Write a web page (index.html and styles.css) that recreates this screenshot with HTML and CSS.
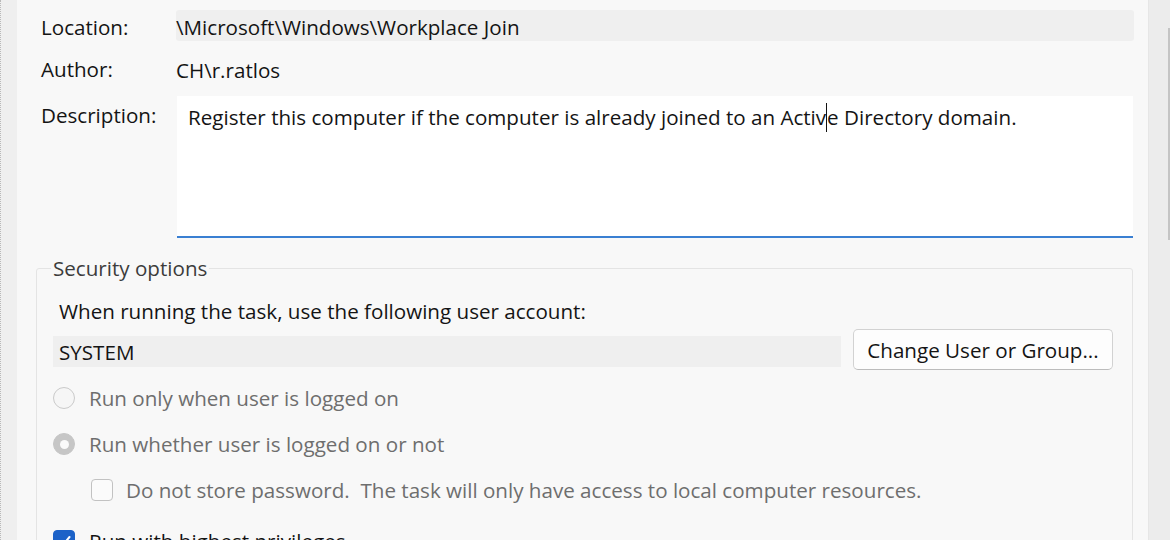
FILE: index.html
```html
<!DOCTYPE html>
<html>
<head>
<meta charset="utf-8">
<link rel="stylesheet" href="styles.css">
</head>
<body>
<div class="window">
  <div class="edge-left"></div>
  <div class="panel">
    <div class="props">
      <div class="label">Location:</div>
      <div class="value readonly">\Microsoft\Windows\Workplace Join</div>
      <div class="label">Author:</div>
      <div class="value">CH\r.ratlos</div>
      <div class="label label-top">Description:</div>
      <div class="textarea">Register this computer if the computer is already joined to an Activ<span class="caret"></span>e Directory domain.</div>
    </div>
    <fieldset class="security">
      <legend>Security options</legend>
      <div class="line">When running the task, use the following user account:</div>
      <div class="account-row">
        <div class="account">SYSTEM</div>
        <button class="btn">Change User or Group...</button>
      </div>
      <div class="option disabled first"><span class="radio"></span>Run only when user is logged on</div>
      <div class="option disabled"><span class="radio on"></span>Run whether user is logged on or not</div>
      <div class="option disabled sub"><span class="check"></span>Do not store password.&nbsp; The task will only have access to local computer resources.</div>
      <div class="option last"><span class="check on"><svg viewBox="0 0 22 22" width="22" height="22"><path d="M5.5 11.5 L9.5 15.5 L16.5 7" fill="none" stroke="#fff" stroke-width="2" stroke-linecap="round" stroke-linejoin="round"/></svg></span>Run with highest privileges</div>
    </fieldset>
  </div>
  <div class="edge-right"><div class="scroll-line"></div></div>
</div>
</body>
</html>
```
FILE: styles.css
```css
* { box-sizing: border-box; }
html, body { margin: 0; padding: 0; }
body {
  width: 1170px;
  height: 540px;
  overflow: hidden;
  background: #f0f0f0;
  font-family: "Open Sans", "Noto Sans", "DejaVu Sans", sans-serif;
  font-size: 20.6px;
  color: #141414;
}
.window {
  display: flex;
  height: 540px;
  overflow: hidden;
}
.edge-left {
  width: 17px;
  flex: none;
  background: #efefef;
  border-left: 1px dotted #b9b9b9;
}
.edge-right {
  width: 22px;
  flex: none;
  background: #ececec;
  border-left: 1px solid #e6e6e6;
  display: flex;
  justify-content: flex-end;
  padding-top: 28px;
}
.scroll-line {
  width: 2px;
  height: 212px;
  background: #c4c4c4;
}
.panel {
  flex: 1;
  background: #f8f8f8;
  padding: 10px 14px 0 19px;
  overflow: hidden;
}
.props {
  display: grid;
  grid-template-columns: 135px 1fr;
  grid-template-rows: 31px 43px 142px;
  row-gap: 6px;
  margin-left: 5px;
  align-items: center;
  line-height: 28px;
}
.label:first-child { padding-top: 2px; }
.label-top { align-self: start; padding-top: 5px; }
.readonly {
  height: 31px;
  background: #efefef;
  border-radius: 3px;
  display: flex;
  align-items: center;
  padding-top: 6px;
}
.value { padding-top: 2px; }
.textarea {
  align-self: stretch;
  background: #ffffff;
  border-bottom: 2px solid #3a7fd2;
  padding: 7px 11px 6px;
  margin-left: 1px;
  margin-right: 1px;
}
.caret {
  display: inline-block;
  width: 0;
  height: 29px;
  border-left: 1.5px solid #111;
  vertical-align: -7px;
}
.security {
  margin: 17px 1px 0 0;
  padding: 14px 19px 0 16px;
  border: 1px solid #e4e4e4;
  border-radius: 3px;
  height: 320px;
}
.security legend {
  color: #3c3c3c;
  padding: 0 2px;
  margin-left: -2px;
  line-height: 26px;
}
.line { padding-left: 6px; height: 26px; line-height: 26px; margin-top: 3px; }
.account-row {
  display: flex;
  align-items: center;
  gap: 12px;
  margin-top: 5px;
}
.account {
  flex: 1;
  height: 31px;
  line-height: 33px;
  background: #efefef;
  padding-left: 6px;
  margin-top: 4px;
}
.btn {
  width: 260px;
  height: 41px;
  font: inherit;
  color: #141414;
  background: #fdfdfd;
  border: 1px solid #d2d2d2;
  border-bottom-color: #bcbcbc;
  border-radius: 5px;
  padding: 0;
}
.option {
  display: flex;
  align-items: center;
  height: 46px;
  gap: 14px;
}
.option.disabled { color: #6e6e6e; }
.option.first { margin-top: 5px; }
.option.sub { padding-left: 38px; height: 45px; gap: 13px; }
.option.last { margin-top: 6px; color: #141414; }
.radio {
  width: 22px;
  height: 22px;
  border-radius: 50%;
  border: 1.5px solid #cacaca;
  background: #f6f6f6;
  flex: none;
  display: flex;
  align-items: center;
  justify-content: center;
}
.radio.on {
  background: #c6c6c6;
  border-color: #c6c6c6;
}
.radio.on::after {
  content: "";
  width: 9px;
  height: 9px;
  border-radius: 50%;
  background: #fafafa;
}
.check {
  width: 22px;
  height: 22px;
  border-radius: 4px;
  border: 1.5px solid #c2c2c2;
  background: #fbfbfb;
  flex: none;
}
.check.on {
  background: #1c62c8;
  border-color: #1c62c8;
  display: flex;
  align-items: center;
  justify-content: center;
}
.check.on svg { display: block; margin: -1.5px; }
```
